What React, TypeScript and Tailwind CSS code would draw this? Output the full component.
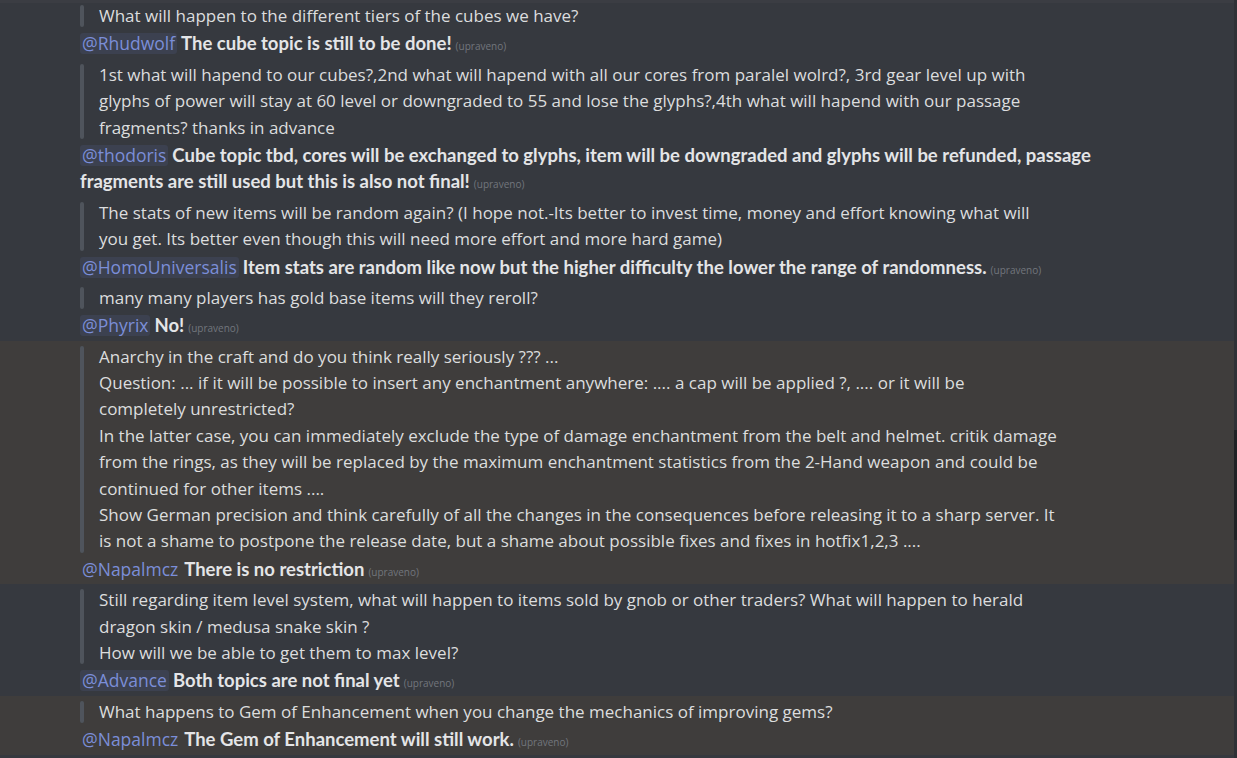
import React from 'react';

type Msg = {
  quote: string[];
  user: string;
  reply: string[];
  highlight?: boolean;
};

const messages: Msg[] = [
  {
    quote: ['What will happen to the different tiers of the cubes we have?'],
    user: 'Rhudwolf',
    reply: ['The cube topic is still to be done!'],
  },
  {
    quote: [
      '1st what will hapend to our cubes?,2nd what will hapend with all our cores from paralel wolrd?, 3rd gear level up with',
      'glyphs of power will stay at 60 level or downgraded to 55 and lose the glyphs?,4th what will hapend with our passage',
      'fragments? thanks in advance',
    ],
    user: 'thodoris',
    reply: [
      'Cube topic tbd, cores will be exchanged to glyphs, item will be downgraded and glyphs will be refunded, passage',
      'fragments are still used but this is also not final!',
    ],
  },
  {
    quote: [
      'The stats of new items will be random again? (I hope not.-Its better to invest time, money and effort knowing what will',
      'you get. Its better even though this will need more effort and more hard game)',
    ],
    user: 'HomoUniversalis',
    reply: ['Item stats are random like now but the higher difficulty the lower the range of randomness.'],
  },
  {
    quote: ['many many players has gold base items will they reroll?'],
    user: 'Phyrix',
    reply: ['No!'],
  },
  {
    quote: [
      'Anarchy in the craft and do you think really seriously ??? ...',
      'Question: ... if it will be possible to insert any enchantment anywhere: .... a cap will be applied ?, .... or it will be',
      'completely unrestricted?',
      'In the latter case, you can immediately exclude the type of damage enchantment from the belt and helmet. critik damage',
      'from the rings, as they will be replaced by the maximum enchantment statistics from the 2-Hand weapon and could be',
      'continued for other items ....',
      'Show German precision and think carefully of all the changes in the consequences before releasing it to a sharp server. It',
      'is not a shame to postpone the release date, but a shame about possible fixes and fixes in hotfix1,2,3 ....',
    ],
    user: 'Napalmcz',
    reply: ['There is no restriction'],
    highlight: true,
  },
  {
    quote: [
      'Still regarding item level system, what will happen to items sold by gnob or other traders? What will happen to herald',
      'dragon skin / medusa snake skin ?',
      'How will we be able to get them to max level?',
    ],
    user: 'Advance',
    reply: ['Both topics are not final yet'],
  },
  {
    quote: ['What happens to Gem of Enhancement when you change the mechanics of improving gems?'],
    user: 'Napalmcz',
    reply: ['The Gem of Enhancement will still work.'],
    highlight: true,
  },
  {
    quote: ['Will the new items also drop from the old bosses or only from the new ones?'],
    user: 'Napalmcz',
    reply: ['Yes'],
  },
];

const Message: React.FC<{ m: Msg; first?: boolean }> = ({ m, first }) => (
  <div className={`${first ? 'pt-0' : 'pt-[1px]'} pb-[1px] pl-[80px] ${m.highlight ? 'bg-[#3f3d3c]' : ''}`}>
    {/* citace */}
    <div className={`flex ${first ? 'pt-0' : 'pt-[2px]'} pb-[2px]`}>
      <div className="w-[4px] shrink-0 rounded-[2px] bg-[#4f545c] my-[2px]" />
      <div className="pl-[15px] text-[17px] leading-[26.4px] text-[#dcddde] whitespace-nowrap">
        {m.quote.map((l, i) => (
          <div key={i} className="h-[26.4px]">{l}</div>
        ))}
      </div>
    </div>
    {/* odpověď */}
    <div className="text-[16px] leading-[26.4px] whitespace-nowrap">
      {m.reply.map((l, i) => (
        <div key={i} className="h-[26.4px]">
          {i === 0 && (
            <span
              className={`inline-block rounded-[3px] px-[2px] mr-[4px] text-[17.5px] leading-[21px] text-[#7b8ed8] ${
                m.highlight ? '' : 'bg-[#3c4150]'
              }`}
            >
              @{m.user}
            </span>
          )}
          <span className="font-['Lato'] font-bold text-[18.5px] leading-none text-[#e4e5e7]">{l}</span>
          {i === m.reply.length - 1 && (
            <span className="ml-[4px] text-[10px] leading-none text-[#72767d]">(upraveno)</span>
          )}
        </div>
      ))}
    </div>
  </div>
);

export default function App() {
  return (
    <div className="flex h-[758px] w-full overflow-hidden bg-[#36393f] font-['Open_Sans',sans-serif]">
      <div className="flex-1 min-w-0">
        <div className="h-[3px] bg-[#3b3d43]" />
        {messages.map((m, i) => (
          <Message key={i} m={m} first={i === 0} />
        ))}
      </div>
      <div className="w-[3px] shrink-0 bg-[#2f3136]">
        <div className="mt-[430px] h-[110px] bg-[#202225]" />
      </div>
    </div>
  );
}
